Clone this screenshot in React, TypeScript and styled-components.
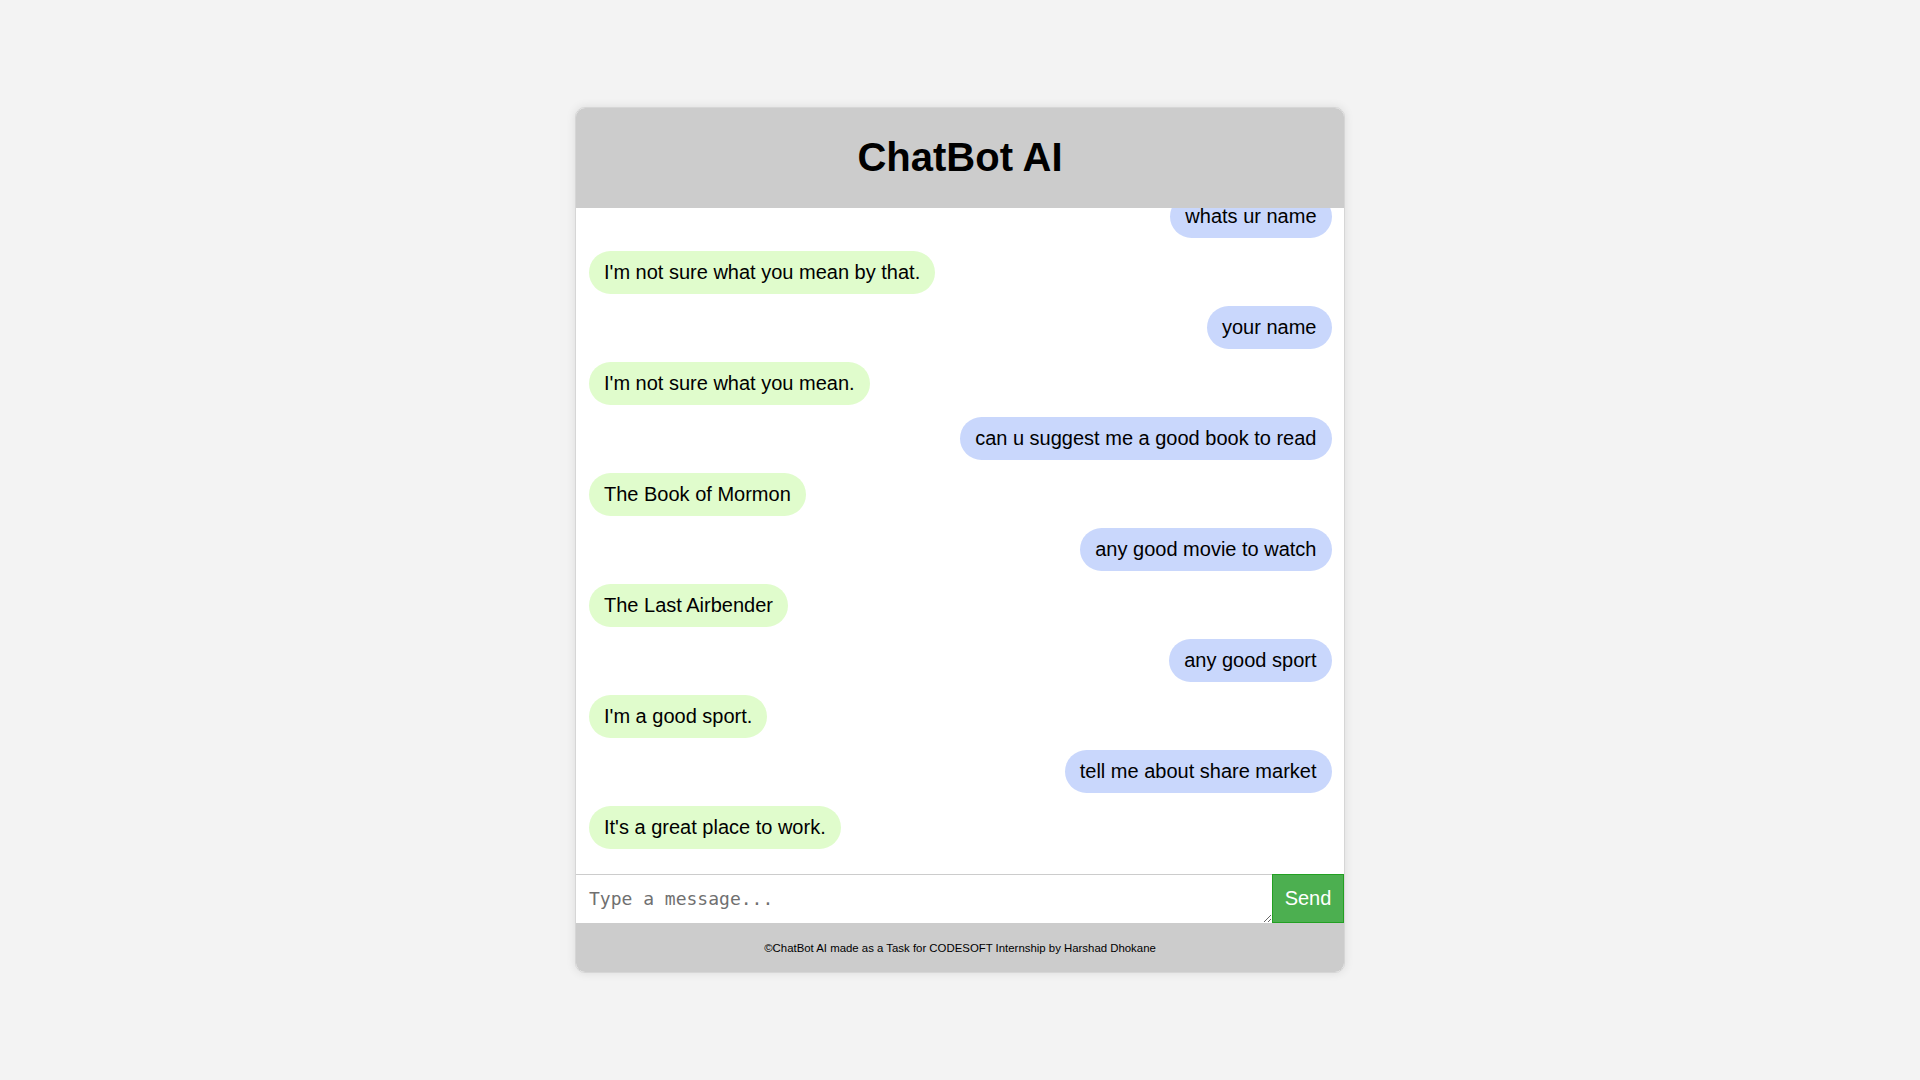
import React, { useLayoutEffect, useRef } from "react";
import styled, { createGlobalStyle } from "styled-components";

const GlobalStyle = createGlobalStyle`
  html, body {
    margin: 0;
    padding: 0;
  }
  body {
    background: #f3f3f3;
    font-family: "Liberation Sans", Arial, sans-serif;
    height: 100vh;
    display: flex;
    align-items: center;
    justify-content: center;
  }
  #root {
    width: 100%;
    display: flex;
    justify-content: center;
  }
`;

const ChatContainer = styled.div`
  width: 768px;
  border: 1px solid #d6d6d6;
  border-radius: 10px;
  overflow: hidden;
  background: #fff;
  box-shadow: 0 0 10px rgba(0, 0, 0, 0.1);
  display: flex;
  flex-direction: column;
`;

const Header = styled.header`
  height: 100px;
  box-sizing: border-box;
  padding-bottom: 2px;
  background: #cccccc;
  display: flex;
  align-items: center;
  justify-content: center;
`;

const Title = styled.h1`
  margin: 0;
  font-size: 40px;
  font-weight: bold;
  color: #000;
`;

const Messages = styled.div`
  height: 666px;
  overflow-y: auto;
  scrollbar-width: none;
  display: flex;
  flex-direction: column;
  gap: 12.5px;
  padding: 13px 12.5px 25.5px 13px;
  box-sizing: border-box;
  &::-webkit-scrollbar {
    display: none;
  }
`;

const Bubble = styled.div<{ $from: "user" | "bot" }>`
  align-self: ${(p) => (p.$from === "user" ? "flex-end" : "flex-start")};
  background: ${(p) => (p.$from === "user" ? "#c9d7fc" : "#e0fccc")};
  color: #000;
  font-size: 20px;
  line-height: 23px;
  padding: 10px 15px;
  border-radius: 22px;
  flex-shrink: 0;
`;

const InputRow = styled.div`
  display: flex;
  height: 49px;
`;

const MessageInput = styled.textarea`
  flex: 1;
  border: none;
  border-top: 1px solid #cccccc;
  padding: 12px 13px 10px;
  font-family: "DejaVu Sans Mono", "Liberation Mono", monospace;
  font-size: 18px;
  line-height: 24px;
  color: #000;
  outline: none;
  box-sizing: border-box;
  height: 49px;
  background: #fff;
  &::placeholder {
    color: #707070;
  }
`;

const SendButton = styled.button`
  width: 72px;
  background: #4caf50;
  color: #fff;
  border: 1px solid #22a022;
  font-family: "Liberation Sans", Arial, sans-serif;
  font-size: 20px;
  padding: 0;
  margin: 0;
  cursor: pointer;
`;

const Footer = styled.footer`
  height: 49px;
  background: #cccccc;
  display: flex;
  align-items: center;
  justify-content: center;
  font-size: 11.4px;
  color: #000;
`;

type Msg = { from: "user" | "bot"; text: string };

const messages: Msg[] = [
  { from: "user", text: "whats ur name" },
  { from: "bot", text: "I'm not sure what you mean by that." },
  { from: "user", text: "your name" },
  { from: "bot", text: "I'm not sure what you mean." },
  { from: "user", text: "can u suggest me a good book to read" },
  { from: "bot", text: "The Book of Mormon" },
  { from: "user", text: "any good movie to watch" },
  { from: "bot", text: "The Last Airbender" },
  { from: "user", text: "any good sport" },
  { from: "bot", text: "I'm a good sport." },
  { from: "user", text: "tell me about share market" },
  { from: "bot", text: "It's a great place to work." },
];

export default function App() {
  const ref = useRef<HTMLDivElement>(null);
  useLayoutEffect(() => {
    if (ref.current) ref.current.scrollTop = ref.current.scrollHeight;
  }, []);
  return (
    <>
      <GlobalStyle />
      <ChatContainer>
        <Header>
          <Title>ChatBot AI</Title>
        </Header>
        <Messages ref={ref}>
          {messages.map((m, i) => (
            <Bubble key={i} $from={m.from}>
              {m.text}
            </Bubble>
          ))}
        </Messages>
        <InputRow>
          <MessageInput placeholder="Type a message..." />
          <SendButton>Send</SendButton>
        </InputRow>
        <Footer>©ChatBot AI made as a Task for CODESOFT Internship by Harshad Dhokane</Footer>
      </ChatContainer>
    </>
  );
}
